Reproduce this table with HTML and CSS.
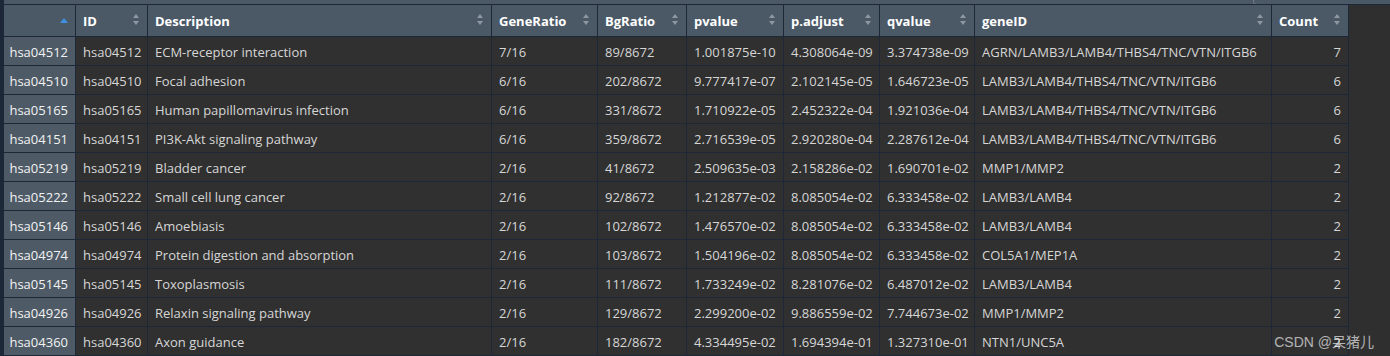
FILE: index.html
```html
<!DOCTYPE html>
<html>
<head>
  <title>enrichKEGG result</title>
  <link rel="stylesheet" href="styles.css">
</head>
<body>
  <div class="viewer">
    <div class="top-strip"><div class="search-box"></div></div>
    <table class="result-table">
      <colgroup>
        <col class="c-rn"><col class="c-id"><col class="c-desc"><col class="c-gr"><col class="c-bg">
        <col class="c-p"><col class="c-padj"><col class="c-q"><col class="c-gene"><col class="c-count">
      </colgroup>
      <thead>
        <tr>
          <th class="rn-head"><span class="sort sort-asc"></span></th>
          <th>ID<span class="sort"></span></th>
          <th>Description<span class="sort"></span></th>
          <th>GeneRatio<span class="sort"></span></th>
          <th>BgRatio<span class="sort"></span></th>
          <th>pvalue<span class="sort"></span></th>
          <th>p.adjust<span class="sort"></span></th>
          <th>qvalue<span class="sort"></span></th>
          <th>geneID<span class="sort"></span></th>
          <th>Count<span class="sort"></span></th>
        </tr>
      </thead>
      <tbody>
        <tr><td class="rn">hsa04512</td><td>hsa04512</td><td>ECM-receptor interaction</td><td>7/16</td><td>89/8672</td><td>1.001875e-10</td><td>4.308064e-09</td><td>3.374738e-09</td><td>AGRN/LAMB3/LAMB4/THBS4/TNC/VTN/ITGB6</td><td class="num">7</td></tr>
        <tr><td class="rn">hsa04510</td><td>hsa04510</td><td>Focal adhesion</td><td>6/16</td><td>202/8672</td><td>9.777417e-07</td><td>2.102145e-05</td><td>1.646723e-05</td><td>LAMB3/LAMB4/THBS4/TNC/VTN/ITGB6</td><td class="num">6</td></tr>
        <tr><td class="rn">hsa05165</td><td>hsa05165</td><td>Human papillomavirus infection</td><td>6/16</td><td>331/8672</td><td>1.710922e-05</td><td>2.452322e-04</td><td>1.921036e-04</td><td>LAMB3/LAMB4/THBS4/TNC/VTN/ITGB6</td><td class="num">6</td></tr>
        <tr><td class="rn">hsa04151</td><td>hsa04151</td><td>PI3K-Akt signaling pathway</td><td>6/16</td><td>359/8672</td><td>2.716539e-05</td><td>2.920280e-04</td><td>2.287612e-04</td><td>LAMB3/LAMB4/THBS4/TNC/VTN/ITGB6</td><td class="num">6</td></tr>
        <tr><td class="rn">hsa05219</td><td>hsa05219</td><td>Bladder cancer</td><td>2/16</td><td>41/8672</td><td>2.509635e-03</td><td>2.158286e-02</td><td>1.690701e-02</td><td>MMP1/MMP2</td><td class="num">2</td></tr>
        <tr><td class="rn">hsa05222</td><td>hsa05222</td><td>Small cell lung cancer</td><td>2/16</td><td>92/8672</td><td>1.212877e-02</td><td>8.085054e-02</td><td>6.333458e-02</td><td>LAMB3/LAMB4</td><td class="num">2</td></tr>
        <tr><td class="rn">hsa05146</td><td>hsa05146</td><td>Amoebiasis</td><td>2/16</td><td>102/8672</td><td>1.476570e-02</td><td>8.085054e-02</td><td>6.333458e-02</td><td>LAMB3/LAMB4</td><td class="num">2</td></tr>
        <tr><td class="rn">hsa04974</td><td>hsa04974</td><td>Protein digestion and absorption</td><td>2/16</td><td>103/8672</td><td>1.504196e-02</td><td>8.085054e-02</td><td>6.333458e-02</td><td>COL5A1/MEP1A</td><td class="num">2</td></tr>
        <tr><td class="rn">hsa05145</td><td>hsa05145</td><td>Toxoplasmosis</td><td>2/16</td><td>111/8672</td><td>1.733249e-02</td><td>8.281076e-02</td><td>6.487012e-02</td><td>LAMB3/LAMB4</td><td class="num">2</td></tr>
        <tr><td class="rn">hsa04926</td><td>hsa04926</td><td>Relaxin signaling pathway</td><td>2/16</td><td>129/8672</td><td>2.299200e-02</td><td>9.886559e-02</td><td>7.744673e-02</td><td>MMP1/MMP2</td><td class="num">2</td></tr>
        <tr><td class="rn">hsa04360</td><td>hsa04360</td><td>Axon guidance</td><td>2/16</td><td>182/8672</td><td>4.334495e-02</td><td>1.694394e-01</td><td>1.327310e-01</td><td>NTN1/UNC5A</td><td class="num">2</td></tr>
      </tbody>
    </table>
    <div class="watermark">CSDN @呆猪儿</div>
  </div>
</body>
</html>
```

FILE: styles.css
```css
html, body {
  margin: 0;
  height: 100%;
  background-color: #2f2f2f;
  overflow: hidden;
}

body {
  font-family: "Open Sans", "Noto Sans", sans-serif;
  font-size: 13px;
  color: #d6d6d6;
}

.viewer {
  position: relative;
  height: 356px;
  border-left: 4px solid #1c2737;
}

/* полоска сверху с обрезанным полем поиска */
.top-strip {
  height: 4px;
  background-color: #4b5866;
  border-bottom: 1px solid #1c2737;
  overflow: hidden;
  display: flex;
  justify-content: flex-end;
}

.search-box {
  width: 136px;
  height: 10px;
  margin-top: -7px;
  border: 1px solid #6e7a86;
  border-right: none;
  border-radius: 4px 0 0 4px;
}

.result-table {
  border-collapse: separate;
  border-spacing: 0;
  table-layout: fixed;
  width: 1345px;
}

.c-rn { width: 72px; }
.c-id { width: 72px; }
.c-desc { width: 344px; }
.c-gr { width: 106px; }
.c-bg { width: 89px; }
.c-p { width: 97px; }
.c-padj { width: 96px; }
.c-q { width: 95px; }
.c-gene { width: 297px; }
.c-count { width: 77px; }

th, td {
  box-sizing: border-box;
  border-right: 1px solid #1c2737;
  border-bottom: 1px solid #1c2737;
  white-space: nowrap;
  overflow: hidden;
}

th {
  position: relative;
  height: 32px;
  padding: 1px 7px 0;
  text-align: left;
  font-weight: bold;
  color: #fff;
  background-color: #4b5967;
}

td {
  height: 29px;
  padding: 2px 7px 0;
  background-color: #303030;
}

td.rn {
  text-align: right;
  padding-right: 7px;
  padding-left: 2px;
  color: #f2f2f2;
  background-color: #4e5b67;
}

td.num {
  text-align: right;
}

/* стрелки сортировки */
.sort {
  position: absolute;
  right: 7px;
  top: 9px;
  width: 7px;
  height: 11px;
}

.sort::before,
.sort::after {
  content: "";
  position: absolute;
  left: 0;
  border-left: 3.5px solid transparent;
  border-right: 3.5px solid transparent;
}

.sort::before {
  top: 0;
  border-bottom: 4px solid #8e98a2;
}

.sort::after {
  bottom: 0;
  border-top: 4px solid #8e98a2;
}

.sort-asc {
  right: 6px;
  top: 13px;
  width: 9px;
}

.sort-asc::before {
  border-left-width: 4.5px;
  border-right-width: 4.5px;
  border-bottom: 5px solid #3d8fe0;
}

.sort-asc::after {
  display: none;
}

.watermark {
  position: absolute;
  right: 16px;
  bottom: 5px;
  font-family: "Liberation Sans", "Noto Sans CJK SC", sans-serif;
  font-size: 14px;
  color: rgba(225, 225, 225, 0.75);
}
```
